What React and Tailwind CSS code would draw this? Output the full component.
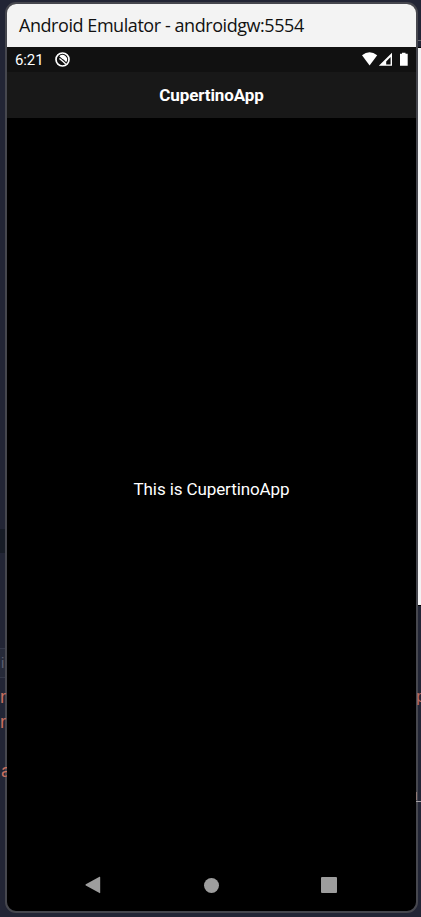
function EditorLeft() {
  return (
    <div className="z-10 -mr-[2px] flex w-[7px] shrink-0 flex-col overflow-hidden pt-[529px] font-['Liberation_Sans',sans-serif] text-[18px] leading-5 text-[#c9705f]">
      <div className="h-6 w-[5px] shrink-0 bg-[#171c26]" />
      <div className="mt-[95px] flex h-[30px] w-[5px] shrink-0 items-center border-y border-[#343849] bg-[#262a39] pl-px text-[15px] text-[#5a5e70]">i</div>
      <span className="mt-[9px] h-5 shrink-0">r</span>
      <span className="mt-[5px] h-5 shrink-0">r</span>
      <span className="mt-[29px] h-5 shrink-0 pl-px">a</span>
    </div>
  );
}

function EditorRight() {
  return (
    <div className="z-10 -ml-[2px] flex w-[5px] shrink-0 flex-col overflow-hidden pt-10 font-['Liberation_Sans',sans-serif] text-[17px] leading-5 text-[#b86a62]">
      <div className="ml-[2px] h-px shrink-0 bg-[#66666c]" />
      <div className="ml-[2px] mt-[6px] h-[559px] shrink-0 border-y border-black bg-[#f3f3f4]" />
      <span className="mt-[81px] h-5 shrink-0">p</span>
      <div className="mt-[85px] h-2 w-px shrink-0 bg-[#8d7775]" />
      <div className="mt-px h-px shrink-0 bg-[#a5a0a4]" />
    </div>
  );
}

function StatusBar() {
  return (
    <div className="flex h-[25px] shrink-0 items-center bg-[#111111] pl-[8px] pr-[7px] text-white">
      <span className="w-[40px] pt-[2px] text-[15px] leading-none tracking-[-0.1px]">6:21</span>
      <svg className="h-[15px] w-[15px]" viewBox="0 0 15 15" fill="none">
        <circle cx="7.5" cy="7.5" r="6.5" stroke="white" strokeWidth="1.7" />
        <path d="M4.3 4.2A4.6 4.6 0 0 1 11.2 10.2L8.9 7.8L7.1 6.8L5.8 5.4Z" fill="white" />
        <path d="M4.4 6.4L8 9.4L10.7 11.9" stroke="white" strokeWidth="1.3" />
      </svg>
      <svg className="ml-auto h-[15px] w-[47px]" viewBox="0 0 47 15" fill="white">
        <path d="M0 3.3Q7.5-2.6 15.2 3.3L7.6 13.5Z" />
        <path fillRule="evenodd" d="M30 0.7V13.8H16.8ZM28.6 5L24.2 9.4V12.5H28.6Z" />
        <path d="M40 0.7H43.5V1.7H45.7V13.8H38V1.7H40Z" />
      </svg>
    </div>
  );
}

function SystemNavigation() {
  return (
    <div className="flex h-[52px] shrink-0 items-center justify-between pl-[78px] pr-[79px]">
      <svg className="h-[18px] w-[16px]" viewBox="0 0 16 18" fill="#9d9d9d">
        <path d="M0.8 8.2L14.5 0.8Q15.2 0.5 15.2 1.2V16.8Q15.2 17.5 14.5 17.1L0.8 9.5Q0 9 0.8 8.2Z" />
      </svg>
      <div className="h-[15px] w-[15px] rounded-full bg-[#9d9d9d]" />
      <div className="h-4 w-4 rounded-[1px] bg-[#9d9d9d]" />
    </div>
  );
}

export default function App() {
  return (
    <div className="flex h-[917px] w-[421px] overflow-hidden bg-[#222535]">
      <EditorLeft />
      <main className="mt-[2px] flex h-[911px] w-[413px] shrink-0 flex-col overflow-hidden rounded-[11px] border-2 border-[#46474e] bg-black font-[Roboto,sans-serif] text-white">
        <header className="flex h-[43px] shrink-0 items-center bg-[#f3f3f3] pl-[12px] font-['Open_Sans','Noto_Sans',sans-serif] text-[18px] tracking-[-0.44px] text-[#111]">
          <span className="whitespace-nowrap">Android Emulator - androidgw:5554</span>
        </header>
        <StatusBar />
        <div className="flex h-[46px] shrink-0 items-center justify-center bg-[#181818] pt-[2px] text-[17px] font-bold tracking-[-0.1px]">
          CupertinoApp
        </div>
        <div className="flex flex-1 items-center justify-center pt-[3px] text-[17px] tracking-[-0.1px]">
          This is CupertinoApp
        </div>
        <SystemNavigation />
      </main>
      <EditorRight />
    </div>
  );
}
